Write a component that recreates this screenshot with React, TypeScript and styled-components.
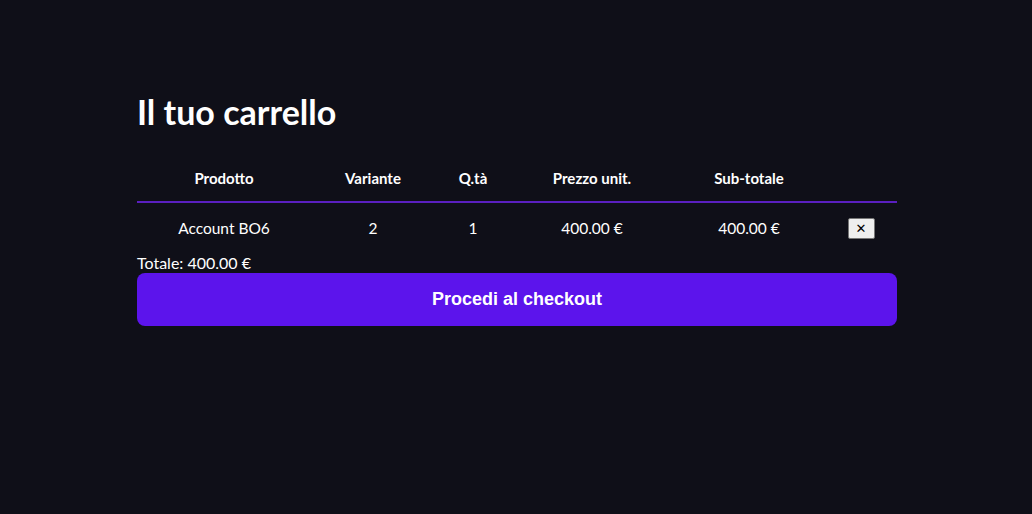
import styled, { createGlobalStyle } from "styled-components";

const GlobalStyle = createGlobalStyle`
  html, body {
    margin: 0;
    padding: 0;
    background-color: #0f0f18;
    color: #ffffff;
    font-family: "Segoe UI", Lato, "Noto Sans", sans-serif;
  }
`;

type CartItem = {
  name: string;
  variant: string;
  qty: number;
  price: number;
};

const items: CartItem[] = [{ name: "Account BO6", variant: "2", qty: 1, price: 400 }];

const columns = [
  { label: "Prodotto", width: 174 },
  { label: "Variante", width: 124 },
  { label: "Q.tà", width: 76 },
  { label: "Prezzo unit.", width: 162 },
  { label: "Sub-totale", width: 152 },
  { label: "", width: 72 },
];

const App = () => {
  const total = items.reduce((sum, item) => sum + item.price * item.qty, 0);
  return (
    <>
      <GlobalStyle />
      <Page>
        <Title>Il tuo carrello</Title>
        <CartTable>
          <colgroup>
            {columns.map((col, i) => (
              <col key={i} style={{ width: col.width }} />
            ))}
          </colgroup>
          <thead>
            <tr>
              {columns.map((col, i) => (
                <HeaderCell key={i}>{col.label}</HeaderCell>
              ))}
            </tr>
          </thead>
          <tbody>
            {items.map((item) => (
              <tr key={item.name}>
                <BodyCell>{item.name}</BodyCell>
                <BodyCell>{item.variant}</BodyCell>
                <BodyCell>{item.qty}</BodyCell>
                <BodyCell>{item.price.toFixed(2)} €</BodyCell>
                <BodyCell>{(item.price * item.qty).toFixed(2)} €</BodyCell>
                <BodyCell>
                  <RemoveButton>✕</RemoveButton>
                </BodyCell>
              </tr>
            ))}
          </tbody>
        </CartTable>
        <TotalLine>Totale: {total.toFixed(2)} €</TotalLine>
        <CheckoutButton>Procedi al checkout</CheckoutButton>
      </Page>
    </>
  );
};

export default App;

const Page = styled.div`
  display: flex;
  flex-direction: column;
  width: 760px;
  margin: 0 auto;
  padding: 90px 0 0 2px;
`;

const Title = styled.h1`
  margin: 0 0 23px;
  font-size: 34px;
  font-weight: 700;
  line-height: 43px;
`;

const CartTable = styled.table`
  width: 100%;
  table-layout: fixed;
  border-collapse: collapse;
`;

const HeaderCell = styled.th`
  padding: 12px 0;
  font-size: 15px;
  font-weight: 700;
  line-height: 21px;
  text-align: center;
  border-bottom: 2px solid #5a1fc0;
`;

const BodyCell = styled.td`
  padding: 14px 0 13px;
  font-size: 15.5px;
  line-height: 21px;
  text-align: center;
`;

const RemoveButton = styled.button`
  width: 27px;
  height: 21px;
  padding: 0;
  font-family: "DejaVu Sans", sans-serif;
  font-size: 13px;
  font-weight: 700;
  color: #000000;
  background-color: #efefef;
  border: 1px solid #767676;
  border-radius: 2px;
  cursor: pointer;
`;

const TotalLine = styled.div`
  font-size: 16px;
  line-height: 21px;
`;

const CheckoutButton = styled.button`
  height: 53px;
  border: none;
  border-radius: 8px;
  background-color: #5c14ec;
  color: #ffffff;
  font-family: "Liberation Sans", Arial, sans-serif;
  font-size: 18px;
  font-weight: 700;
  cursor: pointer;
`;
